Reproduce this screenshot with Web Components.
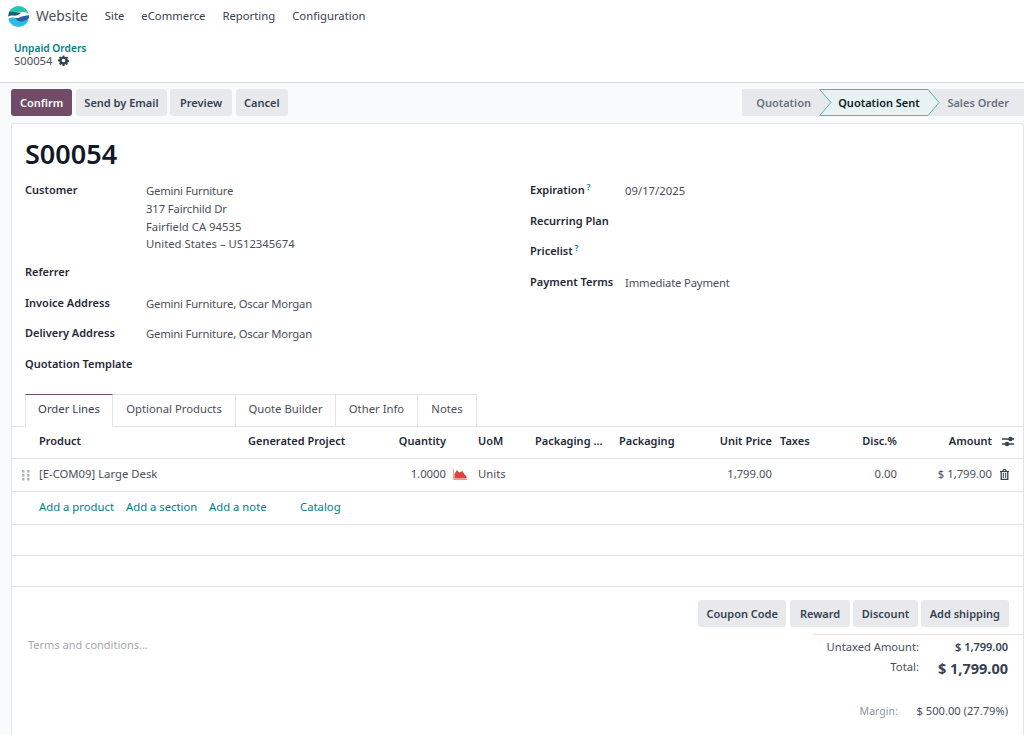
<!DOCTYPE html>
<html><head><meta charset="utf-8"><style>
html,body{margin:0;padding:0;height:735px;overflow:hidden;background:#f9fafb;font:11.3px/18px "Noto Sans",sans-serif;color:#4a4f59}
</style></head><body>
<o-navbar></o-navbar>
<o-crumbs></o-crumbs>
<o-actions></o-actions>
<o-sheet></o-sheet>
<script>
function def(name,html){customElements.define(name,class extends HTMLElement{constructor(){super();this.attachShadow({mode:'open'}).innerHTML=html;}});}
def('o-btn',`<style>:host{display:inline-flex;align-items:center;height:27px;padding:0 var(--p,9px);border-radius:3px;background:#e7e9ed;color:#374151;font:600 11px/18px "Noto Sans",sans-serif;box-sizing:border-box}:host([primary]){background:#714b67;color:#fff}</style><slot></slot>`);
def('o-navbar',`<style>:host{display:flex;align-items:center;height:32px;padding-left:8px;color:#374151;font-size:11.3px;background:#fff}
svg{width:21px;height:21px;display:block}.b{font-size:13.800px;margin:0 17px 0 7px;color:#4a4f59}nav{display:flex;gap:17px}</style>
<svg viewBox="0 0 21 21"><defs><clipPath id="c"><circle cx="10.500" cy="10.500" r="10.500"/></clipPath></defs><g clip-path="url(#c)"><rect width="21" height="21" fill="#fff"/><path d="M0 0H21V8C17 5.500 14 6 11 6.500 7 7 3 6 0 6Z" fill="#22c7ae"/><path d="M0 5.500C4 5.500 8 6.500 13 7 11 9 7 10 5 9.500 3 9.500 1 10 0 10.500Z" fill="#17616e"/><path d="M0 13C3 11 6 11 9 12.500 12 14 17 12 21 9V21H0Z" fill="#2dbce6"/><path d="M7 12C10 13 12 10.500 16 10 18 9.800 20 9.500 21 9V12C18 14.500 15 16 12 15.500 10 15 8 13.500 7 12Z" fill="#2a5fa8"/></g></svg>
<span class="b">Website</span><nav><span>Site</span><span>eCommerce</span><span>Reporting</span><span>Configuration</span></nav>`);
def('o-crumbs',`<style>:host{display:block;height:51px;padding:10px 14px 0;box-sizing:border-box;border-bottom:1px solid #d8dadd;font-size:11.3px;line-height:13px;background:#fff}
.a{color:#017e84;font-weight:600;font-size:10.200px;line-height:12px}.t{display:flex;align-items:center;gap:5px}svg{width:11px;height:11px}</style>
<div class="a">Unpaid Orders</div><div class="t">S00054 <svg viewBox="0 0 24 24" fill="#374151"><path fill-rule="evenodd" d="M10 1h4l.6 3.200 1.900.8L19.200 3.200 22 6l-1.800 2.700.8 1.900 3 .6v4l-3 .6-.8 1.900L22 19l-2.800 2.800-2.700-1.800-1.900.8-.6 3.200h-4l-.6-3.200-1.900-.8L4.800 21.800 2 19l1.800-2.800-.8-1.900-3-.6v-4l3-.6.8-1.900L2 6l2.800-2.800L7.500 5l1.900-.8zM12 8a4 4 0 100 8 4 4 0 000-8z"/></svg></div>`);
def('o-status',`<style>:host{display:flex;align-items:stretch;height:27px;font:600 11px/27px "Noto Sans",sans-serif;color:#6b7280;background:#e7e9ed;width:282px;position:relative}
span{position:relative;z-index:1}.q{width:77px;text-align:right;padding-right:8px;box-sizing:border-box}.s{width:122px;text-align:center;color:#111827;padding-right:2px;box-sizing:border-box}.o{flex:1;text-align:right;padding-right:15px}
svg{position:absolute;left:77px;top:0;width:121px;height:27px}</style>
<svg viewBox="0 0 121 27"><path d="M.6.500H109L120 13.500 109 26.500H.6L12 13.500Z" fill="#e6f2f3" stroke="#5fb0b5"/></svg>
<span class="q">Quotation</span><span class="s">Quotation Sent</span><span class="o">Sales Order</span>`);
def('o-actions',`<style>:host{display:flex;align-items:flex-start;justify-content:space-between;height:40px;padding:6px 0 0 11px;background:#f9fafb;box-sizing:border-box}div{display:flex;gap:3.500px}</style>
<div><o-btn primary>Confirm</o-btn><o-btn style="--p:8px;margin-left:.5px">Send by Email</o-btn><o-btn style="--p:10px">Preview</o-btn><o-btn style="--p:8.500px">Cancel</o-btn></div><o-status></o-status>`);
def('o-field',`<style>:host{display:grid;grid-template-columns:var(--lw,121px) 1fr;min-height:30.500px;line-height:18px}
.l{font-weight:600;color:#1f2937;font-size:11px}.v{color:#4a4f59;padding-top:1px}</style>
<div class="l"><slot name="l"></slot></div><div class="v"><slot></slot></div>`);
def('o-help',`<style>:host{color:#017e84;font-size:8px;font-weight:600;vertical-align:4px;margin-left:2px;line-height:0}</style>?`);
def('o-tabs',`<style>:host{display:grid;grid-template-columns:88px 123px 100px 82px 59px;justify-content:start;height:33px;padding-left:13px;border-bottom:1px solid #e2e4e8;box-sizing:border-box;line-height:28px;color:#4a4f59}
span{text-align:center;border:1px solid #e2e4e8;border-left:0;border-bottom:0;height:32px;box-sizing:border-box}
span.on{border-left:1px solid #e2e4e8;border-top:1px solid #714b67;background:#fff;height:33px;color:#374151;position:relative}</style>
<span class="on">Order Lines</span><span>Optional Products</span><span>Quote Builder</span><span>Other Info</span><span>Notes</span>`);
def('o-lines',`<style>:host{display:block}
.r{display:grid;grid-template-columns:27px 209px 132px 66px 32px 57px 84px 81px 72px 8px 50px 67px 95px 31px;align-items:center;border-bottom:1px solid #e2e4e8;box-sizing:border-box}
.h{height:32px;font-weight:600;color:#1f2937;font-size:11px;padding-bottom:3px}.d{height:33px;color:#4a4f59;padding-bottom:2px}.e{height:31px;border-bottom:1px solid #e2e4e8;box-sizing:border-box}
.n{text-align:right}.pq{white-space:nowrap}.add{display:flex;height:33px;padding:0 0 2px 27px;align-items:center;border-bottom:1px solid #e2e4e8;box-sizing:border-box;color:#017e84}
svg{display:block}</style>
<div class="r h"><i></i><span>Product</span><span>Generated Project</span><span class="n">Quantity</span><i></i><span>UoM</span><span class="pq">Packaging ...</span><span>Packaging</span><span class="n">Unit Price</span><i></i><span>Taxes</span><span class="n">Disc.%</span><span class="n">Amount</span>
<svg style="margin-left:10px" width="12" height="11" viewBox="0 0 12 11" fill="#374151"><path d="M0 2.300H12V3.700H0ZM0 7.300H12V8.700H0Z"/><circle cx="8.500" cy="3" r="2.200"/><circle cx="5" cy="8" r="2.200"/></svg></div>
<div class="r d"><svg style="margin:2px 0 0 10px" width="8" height="11" viewBox="0 0 8 11" fill="#adb5bd"><rect x="0" y="0" width="2.500" height="2.500"/><rect x="5" y="0" width="2.500" height="2.500"/><rect x="0" y="4" width="2.500" height="2.500"/><rect x="5" y="4" width="2.500" height="2.500"/><rect x="0" y="8" width="2.500" height="2.500"/><rect x="5" y="8" width="2.500" height="2.500"/></svg><span>[E-COM09] Large Desk</span><i></i><span class="n">1.0000</span>
<svg style="margin-left:7px" width="14" height="11" viewBox="0 0 14 11"><path d="M1.500 9.500V5L4 1 6 3.500 7.500 3 9.500 2 11.500 5.500 13.500 7V9.500Z" fill="#d9453d"/><path d="M.5 0V10.500H14" fill="none" stroke="#f0a080"/></svg>
<span>Units</span><i></i><i></i><span class="n">1,799.00</span><i></i><i></i><span class="n">0.00</span><span class="n">$ 1,799.00</span>
<svg style="margin-left:8px" width="9" height="11" viewBox="0 0 9 11" fill="none" stroke="#374151"><path d="M0 2.500H9" stroke-width="1.200"/><path d="M3 2.500V.7H6V2.500" stroke-width="1"/><path d="M1.200 2.500V10.300H7.800V2.500" stroke-width="1.300"/><path d="M3.300 4V9M5.700 4V9" stroke-width="1"/></svg></div>
<div class="add"><span style="width:87px">Add a product</span><span style="width:83px">Add a section</span><span style="width:91px">Add a note</span><span>Catalog</span></div>
<div class="e"></div><div class="e"></div>`);
def('o-totals',`<style>:host{display:block;width:210px;border-top:1px solid #e2e4e8;box-sizing:border-box;padding:3px 15px 0 0}
.r{display:grid;grid-template-columns:106px 1fr}.v{text-align:right}.u{height:20px;line-height:18px;font-size:11.200px}.u .v{font-weight:600;color:#374151;font-size:11px}
.t{height:22px;line-height:20px}.t .k{line-height:18px}.t .v{font-weight:700;font-size:14.500px;color:#374151}.k{text-align:right}
.m{display:grid;grid-template-columns:85px 1fr;margin-top:22px;line-height:18px;font-size:11.150px}.m .k{color:#8f96a0;font-size:10.600px}.m .v{color:#4a4f59}</style>
<div class="r u"><span class="k">Untaxed Amount:</span><span class="v">$ 1,799.00</span></div>
<div class="r t"><span class="k">Total:</span><span class="v">$ 1,799.00</span></div>
<div class="m"><span class="k">Margin:</span><span class="v">$ 500.00 (27.79%)</span></div>`);
def('o-footer',`<style>:host{display:block;padding-top:13px}.b{display:flex;justify-content:flex-end;gap:3px;padding-right:14px}.c{display:flex;justify-content:space-between;margin-top:7px}.terms{padding:2px 0 0 16px;color:#a4a9b1;font-size:11px}</style>
<div class="b"><o-btn style="--p:8px;margin-right:1px">Coupon Code</o-btn><o-btn style="--p:10px">Reward</o-btn><o-btn style="--p:8.500px">Discount</o-btn><o-btn>Add shipping</o-btn></div>
<div class="c"><div class="terms">Terms and conditions...</div><o-totals></o-totals></div>`);
def('o-sheet',`<style>:host{display:block;margin-left:11px;height:612px;background:#fff;border:1px solid #e2e4e8;border-bottom:0;border-radius:3px 3px 0 0;box-sizing:border-box;overflow:hidden}
h1{margin:0;padding:12px 0 9px 13px;font:600 27px/36px "Noto Sans",sans-serif;color:#111827}
.f{display:grid;grid-template-columns:505px 1fr;padding-left:13px;margin-bottom:9px}.f o-field.w{--lw:95px}.c{min-height:82px}
.addr{display:block;line-height:17.800px}.t1{letter-spacing:-.19px}.t2{letter-spacing:-.13px}</style>
<h1>S00054</h1>
<div class="f"><div>
<o-field class="c"><span slot="l">Customer</span><span class="addr"><span class="t1">Gemini Furniture</span><br><span class="t2">317 Fairchild Dr</span><br>Fairfield CA 94535<br>United States – US12345674</span></o-field>
<o-field><span slot="l">Referrer</span></o-field>
<o-field><span slot="l">Invoice Address</span><span class="t1">Gemini Furniture, Oscar Morgan</span></o-field>
<o-field><span slot="l">Delivery Address</span><span class="t1">Gemini Furniture, Oscar Morgan</span></o-field>
<o-field><span slot="l">Quotation Template</span></o-field>
</div><div>
<o-field class="w"><span slot="l">Expiration<o-help></o-help></span>09/17/2025</o-field>
<o-field class="w"><span slot="l">Recurring Plan</span></o-field>
<o-field class="w"><span slot="l">Pricelist<o-help></o-help></span></o-field>
<o-field class="w"><span slot="l">Payment Terms</span><span class="t1">Immediate Payment</span></o-field>
</div></div>
<o-tabs></o-tabs><o-lines></o-lines><o-footer></o-footer>`);
</script>
</body></html>
